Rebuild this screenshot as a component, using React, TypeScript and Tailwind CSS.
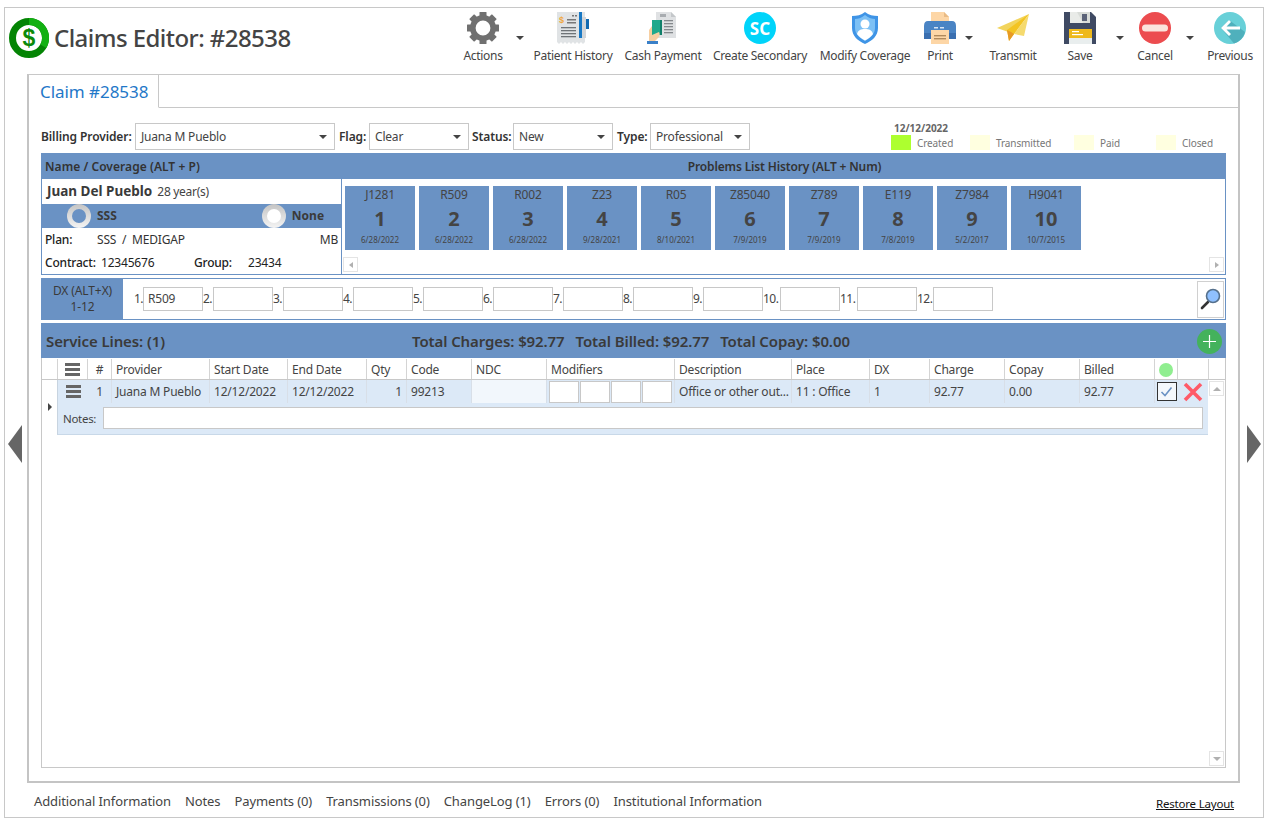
import React from "react";

const font = { fontFamily: '"Noto Sans", "Open Sans", sans-serif' };

const Gear = () => (
  <svg width="32" height="32" viewBox="0 0 32 32">
    {[0, 45, 90, 135, 180, 225, 270, 315].map((a) => (
      <rect key={a} x="12.5" y="0" width="7" height="7" rx="0.5" fill="#707070" transform={`rotate(${a} 16 16)`} />
    ))}
    <circle cx="16" cy="16" r="10.2" fill="none" stroke="#707070" strokeWidth="5.6" />
  </svg>
);

const History = () => (
  <svg width="32" height="32" viewBox="0 0 32 32">
    <path d="M0 0H28V30L26 32L24 30L22 32L20 30L18 32L16 30L14 32L12 30L10 32L8 30L6 32L4 30L2 32L0 30Z" fill="#e0e3e5" />
    <rect x="22" y="5" width="7" height="21" fill="#d2d5d8" />
    <rect x="22" y="0" width="3" height="26" fill="#1878c4" />
    <rect x="29" y="7" width="3" height="10" fill="#1269b0" />
    <text x="2" y="11" fontSize="9" fontWeight="700" fill="#f0a83c" fontFamily="Liberation Sans">$</text>
    <rect x="15" y="3" width="2" height="1.5" fill="#777" />
    <rect x="18" y="3" width="2" height="1.5" fill="#777" />
    <rect x="10" y="7" width="9" height="1.5" fill="#777" />
    <rect x="10" y="10" width="9" height="1.5" fill="#777" />
    {[15, 18, 21, 24].map((y) => (
      <rect key={y} x="4" y={y} width="15" height="1.3" fill="#6f7478" />
    ))}
  </svg>
);

const Cash = () => (
  <svg width="32" height="32" viewBox="0 0 32 32">
    <path d="M9 0H24L29 5V26H9Z" fill="#dfe1e3" />
    <path d="M24 0L29 5H24Z" fill="#c4c7ca" />
    <rect x="13" y="2" width="6" height="3" fill="#a8acb0" />
    {[8, 11, 14, 17, 20].map((y) => (
      <rect key={y} x="17" y={y} width="9" height="1.3" fill="#85898d" />
    ))}
    <path d="M5 8H15V23H5Z" fill="#1fa98c" />
    <rect x="13" y="8" width="2" height="15" fill="#12806a" />
    <path d="M2 18L5 14V23L12 20C13 22 13 24 11 26L8 29H2Z" fill="#f7cfa2" />
    <rect x="0" y="29" width="11" height="3" fill="#3a80c8" />
  </svg>
);

const SC = () => (
  <div className="w-8 h-8 rounded-full bg-[#00d4fa] flex items-center justify-center text-white font-bold text-[17px] leading-none">SC</div>
);

const Shield = () => (
  <svg width="32" height="32" viewBox="0 0 32 32">
    <path d="M16 0C20 3 24 4 29 4V16C29 24 23 29 16 32C9 29 3 24 3 16V4C8 4 12 3 16 0Z" fill="#3f94e6" />
    <path d="M16 3C20 6 23 7 26 7V16C26 22 21 26 16 29C11 26 6 22 6 16V7C9 7 12 6 16 3Z" fill="#7cc0f5" />
    <circle cx="16" cy="12" r="4.5" fill="#fff" />
    <path d="M8 22C9 18 12 17 16 17C20 17 23 18 24 22C22 25 19 27 16 28.5C13 27 10 25 8 22Z" fill="#fff" />
  </svg>
);

const Printer = () => (
  <svg width="34" height="32" viewBox="0 0 34 32">
    <path d="M8 0H21L26 5V12H8Z" fill="#fdd6a6" />
    <path d="M21 0L26 5H21Z" fill="#e9bb85" />
    <path d="M5 9H29Q33 9 33 14V27H1V14Q1 9 5 9Z" fill="#4a84c4" />
    <rect x="1" y="21" width="32" height="6" fill="#3a6fb0" />
    <rect x="11" y="15" width="4" height="1.5" fill="#d7e4f3" />
    <rect x="17" y="15" width="4" height="1.5" fill="#d7e4f3" />
    <rect x="8" y="18" width="18" height="14" fill="#fdd6a6" />
    <rect x="11" y="23" width="12" height="1.4" fill="#b08a5c" />
    <rect x="11" y="26" width="12" height="1.4" fill="#b08a5c" />
  </svg>
);

const Plane = () => (
  <svg width="32" height="28" viewBox="0 0 32 28">
    <path d="M0 14L32 0L17 20Z" fill="#f2d45c" />
    <path d="M32 0L10 16L12 27L17 20Z" fill="#f3c422" />
    <path d="M10 16L12 27L17 20L14 18Z" fill="#e79a25" />
    <path d="M32 0L17 20L27 22Z" fill="#f5da6e" />
  </svg>
);

const Floppy = () => (
  <svg width="32" height="32" viewBox="0 0 32 32">
    <path d="M0 0H27L32 5V32H0Z" fill="#3f4a63" />
    <rect x="6" y="0" width="20" height="11" fill="#d9dcd8" />
    <path d="M6 0H13L19 11H6Z" fill="#e9ebe8" />
    <rect x="18" y="2" width="5" height="7" fill="#5b6378" />
    <rect x="5" y="17" width="23" height="9" fill="#eeb91c" />
    <rect x="5" y="26" width="23" height="6" fill="#e9eeee" />
    <rect x="8" y="19" width="7" height="1.2" fill="#fff" />
    <rect x="8" y="22" width="11" height="1.2" fill="#fff" />
  </svg>
);

const Cancel = () => (
  <svg width="32" height="32" viewBox="0 0 32 32">
    <circle cx="16" cy="16" r="16" fill="#ec4c4f" />
    <rect x="3" y="12.5" width="26" height="7" rx="3.5" fill="#fbe3dc" />
  </svg>
);

const Previous = () => (
  <svg width="32" height="32" viewBox="0 0 32 32">
    <circle cx="16" cy="16" r="16" fill="#68d0d8" />
    <path d="M7 16L15 8L31 20A16 16 0 0 1 20 31.5Z" fill="#4fb0bc" />
    <path d="M15 8L7 16L15 24L17 22L12.5 17.5H26V14.5H12.5L17 10Z" fill="#fff" />
  </svg>
);

const Caret = ({ w }: { w: string }) => (
  <div className={`${w} flex justify-center pt-[24px] self-start`}>
    <div className="w-0 h-0 border-l-[4px] border-r-[4px] border-t-[4px] border-l-transparent border-r-transparent border-t-[#444]" />
  </div>
);

const Tool = ({ label, w, children }: { label: string; w: string; children: React.ReactNode }) => (
  <div className={`${w} flex flex-col items-center shrink-0`}>
    <div className="h-[32px] flex items-center justify-center">{children}</div>
    <div className="mt-[3px] text-[12px] leading-[18px] text-[#444] whitespace-nowrap tracking-[-0.3px]">{label}</div>
  </div>
);

const Select = ({ value, w }: { value: string; w: string }) => (
  <div className={`${w} h-[27px] border border-[#c8c8c8] flex items-center justify-between pl-[5px] pr-[7px] text-[12px] text-[#444] bg-white shrink-0 tracking-[-0.2px]`}>
    <span>{value}</span>
    <span className="w-0 h-0 border-l-[4px] border-r-[4px] border-t-[4px] border-l-transparent border-r-transparent border-t-[#444]" />
  </div>
);

const Label = ({ children, w }: { children: React.ReactNode; w: string }) => (
  <div className={`${w} shrink-0 text-[12px] font-semibold text-[#333] whitespace-nowrap tracking-[-0.1px]`}>{children}</div>
);

const Legend = ({ label, color, w }: { label: string; color: string; w: string }) => (
  <div className={`${w} flex items-end shrink-0`}>
    <div className="w-[20px] h-[15px]" style={{ backgroundColor: color }} />
    <div className="ml-[6px] text-[10px] leading-[14px] text-[#777] tracking-[-0.1px]">{label}</div>
  </div>
);

const problems = [
  ["J1281", "6/28/2022"],
  ["R509", "6/28/2022"],
  ["R002", "6/28/2022"],
  ["Z23", "9/28/2021"],
  ["R05", "8/10/2021"],
  ["Z85040", "7/9/2019"],
  ["Z789", "7/9/2019"],
  ["E119", "7/8/2019"],
  ["Z7984", "5/2/2017"],
  ["H9041", "10/7/2015"],
];

const Toggle = ({ on }: { on: boolean }) => (
  <div className="w-[24px] h-[24px] rounded-full bg-gradient-to-b from-[#c4c4c4] to-[#f4f4f4] flex items-center justify-center">
    <div className={`w-[14px] h-[14px] rounded-full ${on ? "bg-[#6a92c4]" : "bg-white"}`} />
  </div>
);

const ScrollBtn = ({ dir }: { dir: "l" | "r" | "u" | "d" }) => (
  <div className="w-[15px] h-[15px] border border-[#e4e4e4] bg-white flex items-center justify-center shrink-0">
    {dir === "l" && <div className="w-0 h-0 border-y-[3px] border-r-[4px] border-y-transparent border-r-[#b0b0b0]" />}
    {dir === "r" && <div className="w-0 h-0 border-y-[3px] border-l-[4px] border-y-transparent border-l-[#b0b0b0]" />}
    {dir === "u" && <div className="w-0 h-0 border-x-[4px] border-b-[4px] border-x-transparent border-b-[#b0b0b0]" />}
    {dir === "d" && <div className="w-0 h-0 border-x-[4px] border-t-[4px] border-x-transparent border-t-[#b0b0b0]" />}
  </div>
);

const dx = [
  ["1.", "R509", "w-[9px]"],
  ["2.", "", "w-[10px]"],
  ["3.", "", "w-[10px]"],
  ["4.", "", "w-[10px]"],
  ["5.", "", "w-[10px]"],
  ["6.", "", "w-[10px]"],
  ["7.", "", "w-[10px]"],
  ["8.", "", "w-[10px]"],
  ["9.", "", "w-[10px]"],
  ["10.", "", "w-[17px]"],
  ["11.", "", "w-[17px]"],
  ["12.", "", "w-[16px]"],
];

const Hamburger = () => (
  <div className="flex flex-col gap-[2px]">
    <div className="w-[15px] h-[3px] bg-[#666]" />
    <div className="w-[15px] h-[3px] bg-[#666]" />
    <div className="w-[15px] h-[3px] bg-[#666]" />
  </div>
);

const cols = [
  { t: "Provider", v: "Juana M Pueblo", w: "w-[98px]" },
  { t: "Start Date", v: "12/12/2022", w: "w-[78px]" },
  { t: "End Date", v: "12/12/2022", w: "w-[79px]" },
  { t: "Qty", v: "1", w: "w-[40px]", right: true },
  { t: "Code", v: "99213", w: "w-[65px]" },
];
const cols2 = [
  { t: "Description", v: "Office or other out...", w: "w-[117px]" },
  { t: "Place", v: "11 : Office", w: "w-[78px]" },
  { t: "DX", v: "1", w: "w-[60px]" },
  { t: "Charge", v: "92.77", w: "w-[75px]" },
  { t: "Copay", v: "0.00", w: "w-[75px]" },
  { t: "Billed", v: "92.77", w: "w-[75px]" },
];

const hCell = "h-full border-r border-[#d4d4d4] flex items-center px-[4px] pt-[1px] shrink-0 whitespace-nowrap tracking-[-0.2px]";
const rCell = "h-[23px] border-r border-[#d8dfe8] flex items-center px-[4px] pt-[1px] shrink-0 whitespace-nowrap tracking-[-0.2px]";

const tabs = ["Additional Information", "Notes", "Payments (0)", "Transmissions (0)", "ChangeLog (1)", "Errors (0)", "Institutional Information"];

export default function App() {
  return (
    <div style={font} className="w-[1267px] h-[821px] bg-white pt-[7px] pl-[4px] overflow-hidden">
      <div className="w-[1260px] h-[811px] border border-[#c8c8c8] flex flex-col">
        {/* header */}
        <div className="h-[66px] flex shrink-0">
          <div className="flex items-start pl-[4px] pt-[10px] w-[448px] shrink-0">
            <svg width="40" height="40" viewBox="0 0 40 40">
              <circle cx="20" cy="20" r="16.5" fill="#fff" stroke="#048404" strokeWidth="7" />
              <path d="M20 3.5A16.5 16.5 0 0 1 34.3 28.2" fill="none" stroke="#12b012" strokeWidth="7" />
              <text x="20" y="28" textAnchor="middle" fontSize="23" fontWeight="700" fill="#0a8a0a" fontFamily="Liberation Sans">$</text>
            </svg>
            <div className="ml-[5px] mt-[1px] text-[24px] leading-[38px] font-medium text-[#444] whitespace-nowrap tracking-[-0.55px]">Claims Editor: #28538</div>
          </div>
          <div className="flex pt-[4px] items-start">
            <Tool label="Actions" w="w-[60px]"><Gear /></Tool>
            <Caret w="w-[14px]" />
            <div className="w-[1px]" />
            <Tool label="Patient History" w="w-[90px]"><History /></Tool>
            <Tool label="Cash Payment" w="w-[90px]"><Cash /></Tool>
            <Tool label="Create Secondary" w="w-[104px]"><SC /></Tool>
            <Tool label="Modify Coverage" w="w-[106px]"><Shield /></Tool>
            <Tool label="Print" w="w-[44px]"><Printer /></Tool>
            <Caret w="w-[14px]" />
            <Tool label="Transmit" w="w-[74px]"><Plane /></Tool>
            <Tool label="Save" w="w-[60px]"><Floppy /></Tool>
            <Caret w="w-[20px]" />
            <Tool label="Cancel" w="w-[50px]"><Cancel /></Tool>
            <Caret w="w-[20px]" />
            <Tool label="Previous" w="w-[60px]"><Previous /></Tool>
          </div>
        </div>

        {/* body */}
        <div className="flex flex-1 min-h-0">
          <div className="w-[22px] shrink-0 flex items-center justify-center">
            <div className="w-0 h-0 border-y-[19px] border-r-[14px] border-y-transparent border-r-[#666] mr-[3px] mt-[30px]" />
          </div>
          <div className="w-[1213px] h-[709px] shrink-0 border-t border-t-[#c8c8c8] border-l-2 border-r-2 border-b-2 border-l-[#c4c4c4] border-r-[#c4c4c4] border-b-[#c4c4c4] flex flex-col">
            <div className="h-[33px] border-b border-[#c8c8c8] shrink-0 flex">
              <div className="w-[130px] h-[33px] border-r border-b border-b-white border-r-[#c8c8c8] flex items-center pl-[11px] pt-[1px] text-[17px] text-[#1f78c8] bg-white tracking-[-0.05px]">Claim #28538</div>
            </div>
            <div className="flex-1 min-h-0 pl-[12px] pr-[12px] pt-[15px] flex flex-col pb-[13px]">
              {/* filter row */}
              <div className="h-[27px] flex items-center shrink-0">
                <Label w="w-[94px]">Billing Provider:</Label>
                <Select value="Juana M Pueblo" w="w-[200px]" />
                <Label w="w-[34px] pl-[4px]">Flag:</Label>
                <Select value="Clear" w="w-[100px]" />
                <Label w="w-[44px] pl-[3px]">Status:</Label>
                <Select value="New" w="w-[100px]" />
                <Label w="w-[37px] pl-[4px]">Type:</Label>
                <Select value="Professional" w="w-[100px]" />
                <div className="ml-[141px] flex flex-col h-[27px] mt-[-2px]">
                  <div className="pl-[3px] text-[10px] leading-[12px] font-bold text-[#666]">12/12/2022</div>
                  <div className="flex mt-[1px]">
                    <Legend label="Created" color="#adff2f" w="w-[79px]" />
                    <Legend label="Transmitted" color="#ffffe0" w="w-[104px]" />
                    <Legend label="Paid" color="#ffffe0" w="w-[82px]" />
                    <Legend label="Closed" color="#ffffe0" w="w-[60px]" />
                  </div>
                </div>
              </div>

              {/* blue heading */}
              <div className="mt-[3px] h-[26px] bg-[#6a92c4] flex items-center pt-[2px] text-[12px] font-semibold text-[#333] shrink-0">
                <div className="w-[301px] pl-[4px] shrink-0 tracking-[0.05px]">Name / Coverage (ALT + P)</div>
                <div className="flex-1 text-center pl-[1px] tracking-[-0.15px]">Problems List History (ALT + Num)</div>
              </div>

              {/* coverage + problems */}
              <div className="h-[96px] border-x border-b border-[#6a92c4] flex shrink-0">
                <div className="w-[300px] border-r border-[#6a92c4] flex flex-col shrink-0">
                  <div className="h-[25px] flex items-center pl-[5px] text-[#444]">
                    <span className="text-[13.5px] font-bold text-[#3a3a3a] tracking-[0px]">Juan Del Pueblo</span>
                    <span className="ml-[5px] text-[12px] tracking-[-0.3px]">28 year(s)</span>
                  </div>
                  <div className="h-[24px] bg-[#6a92c4] flex items-center text-[12px] font-bold text-[#3a3a3a]">
                    <div className="ml-[25px]"><Toggle on /></div>
                    <span className="ml-[6px]">SSS</span>
                    <div className="ml-[145px]"><Toggle on={false} /></div>
                    <span className="ml-[6px]">None</span>
                  </div>
                  <div className="h-[23px] flex items-center pl-[3px] text-[12px] text-[#222] tracking-[-0.2px]">
                    <span className="w-[52px] font-medium">Plan:</span>
                    <span className="text-[#333]">SSS&nbsp;&nbsp;/&nbsp;&nbsp;MEDIGAP</span>
                    <span className="ml-auto pr-[3px] text-[#333]">MB</span>
                  </div>
                  <div className="h-[23px] flex items-center pl-[3px] text-[12px] text-[#222] tracking-[-0.2px]">
                    <span className="w-[56px] font-medium shrink-0">Contract:</span>
                    <span className="w-[93px] shrink-0">12345676</span>
                    <span className="w-[54px] shrink-0 font-medium">Group:</span>
                    <span>23434</span>
                  </div>
                </div>
                <div className="flex-1 flex flex-col min-w-0">
                  <div className="flex gap-[4px] pl-[3px] pt-[7px] h-[78px] shrink-0">
                    {problems.map(([code, date], i) => (
                      <div key={code} className="w-[70px] h-[64px] bg-[#6a92c4] flex flex-col items-center text-[#444] shrink-0">
                        <div className="text-[12px] leading-[18px] tracking-[-0.2px]">{code}</div>
                        <div className="text-[20px] leading-[24px] mt-[3px] font-bold text-[#444]">{i + 1}</div>
                        <div className="text-[8px] leading-[10px] mt-[4px]">{date}</div>
                      </div>
                    ))}
                  </div>
                  <div className="flex justify-between px-[1px]">
                    <ScrollBtn dir="l" />
                    <ScrollBtn dir="r" />
                  </div>
                </div>
              </div>

              {/* DX */}
              <div className="mt-[3px] h-[42px] border border-[#6a92c4] flex items-center shrink-0">
                <div className="w-[81px] h-full bg-[#6a92c4] flex flex-col items-center justify-center text-[12px] leading-[16px] text-[#3a3a3a] tracking-[-0.1px] shrink-0">
                  <div>DX (ALT+X)</div>
                  <div>1-12</div>
                </div>
                <div className="flex items-center pl-[11px] text-[12px] text-[#444]">
                  {dx.map(([n, v, w]) => (
                    <React.Fragment key={n}>
                      <span className={`${w} shrink-0 whitespace-nowrap tracking-[-0.5px]`}>{n}</span>
                      <div className="w-[60px] h-[24px] border border-[#c8c8c8] flex items-center pl-[4px] shrink-0 tracking-[-0.2px]">{v}</div>
                    </React.Fragment>
                  ))}
                </div>
                <div className="ml-auto mr-[1px] w-[27px] h-[37px] border border-[#d0d0d0] flex items-center justify-center">
                  <svg width="22" height="24" viewBox="0 0 22 24">
                    <path d="M8 15L2 21" stroke="#333" strokeWidth="2.6" strokeLinecap="round" />
                    <circle cx="13" cy="9" r="6.5" fill="#8fc0ff" stroke="#55708c" strokeWidth="1.6" />
                  </svg>
                </div>
              </div>

              {/* service heading */}
              <div className="mt-[3px] h-[35px] bg-[#6a92c4] flex items-center pt-[1px] shrink-0 text-[#3a3a3a] font-semibold">
                <div className="w-[371px] pl-[5px] text-[15px] tracking-[-0.1px] shrink-0">Service Lines: (1)</div>
                <div className="text-[15px] tracking-[-0.1px] whitespace-nowrap flex gap-[11px]">
                  <span>Total Charges: $92.77</span>
                  <span>Total Billed: $92.77</span>
                  <span>Total Copay: $0.00</span>
                </div>
                <div className="ml-auto mr-[4px] w-[25px] h-[25px] rounded-full bg-[#44b25c] flex items-center justify-center">
                  <svg width="15" height="15" viewBox="0 0 15 15"><path d="M7.5 1V14M1 7.5H14" stroke="#fff" strokeWidth="1.2" /></svg>
                </div>
              </div>

              {/* table */}
              <div className="flex-1 min-h-0 border-x border-b border-[#c8c8c8] flex flex-col text-[12px] text-[#444]">
                <div className="h-[21px] border-b border-[#c8c8c8] flex shrink-0 mt-[1px]">
                  <div className={`${hCell} w-[16px] !px-0`} />
                  <div className={`${hCell} w-[30px] justify-center`}><Hamburger /></div>
                  <div className={`${hCell} w-[24px] justify-center`}>#</div>
                  {cols.map((c) => <div key={c.t} className={`${hCell} ${c.w}`}>{c.t}</div>)}
                  <div className={`${hCell} w-[75px]`}>NDC</div>
                  <div className={`${hCell} w-[128px]`}>Modifiers</div>
                  {cols2.map((c) => <div key={c.t} className={`${hCell} ${c.w}`}>{c.t}</div>)}
                  <div className={`${hCell} w-[23px] justify-center`}><div className="w-[14px] h-[14px] rounded-full bg-[#90ee90]" /></div>
                  <div className={`${hCell} w-[31px]`} />
                </div>
                <div className="flex-1 min-h-0 flex">
                  <div className="w-[15px] shrink-0 h-[55px] flex items-end justify-center pb-[24px]">
                    <div className="w-0 h-0 border-y-[4px] border-l-[4px] border-y-transparent border-l-[#444]" />
                  </div>
                  <div className="w-[1151px] shrink-0">
                    <div className="bg-[#dce9f7] border-l border-b border-l-[#c8d4e0] border-b-[#c8d8e8] h-[55px]">
                      <div className="flex h-[23px]">
                        <div className={`${rCell} w-[30px] justify-center !border-r-0 !pt-0`}><Hamburger /></div>
                        <div className={`${rCell} w-[24px] justify-center`}>1</div>
                        {cols.map((c) => (
                          <div key={c.t} className={`${rCell} ${c.w} ${c.right ? "justify-end" : ""}`}>{c.v}</div>
                        ))}
                        <div className={`${rCell} w-[75px] bg-[#f2f7fc]`} />
                        <div className={`${rCell} w-[128px] gap-[1px] !px-[2px] !pt-0`}>
                          {[0, 1, 2, 3].map((i) => <div key={i} className="w-[30px] h-[22px] border border-[#c8c8c8] bg-white shrink-0" />)}
                        </div>
                        {cols2.map((c) => <div key={c.t} className={`${rCell} ${c.w}`}>{c.v}</div>)}
                        <div className="w-[23px] h-[23px] flex items-center justify-center shrink-0">
                          <div className="w-[20px] h-[19px] border border-[#333] bg-[#f4f8fc] flex items-center justify-center">
                            <svg width="13" height="11" viewBox="0 0 13 11"><path d="M1.5 6L5 9.5L11.5 1.5" stroke="#6a92c4" strokeWidth="1.6" fill="none" /></svg>
                          </div>
                        </div>
                        <div className="w-[29px] h-[23px] flex items-center justify-center shrink-0">
                          <svg width="20" height="20" viewBox="0 0 20 20"><path d="M2 2L18 18M18 2L2 18" stroke="#ff5a68" strokeWidth="3.6" /></svg>
                        </div>
                      </div>
                      <div className="flex items-start h-[31px] pt-[4px]">
                        <span className="w-[45px] pl-[5px] pt-[1px] shrink-0 tracking-[-0.3px] text-[11.5px] leading-[22px]">Notes:</span>
                        <div className="w-[1100px] h-[22px] border border-[#c8c8c8] bg-white shrink-0" />
                      </div>
                    </div>
                  </div>
                  <div className="flex-1 flex flex-col justify-between items-center pt-[1px] pb-[1px]">
                    <ScrollBtn dir="u" />
                    <ScrollBtn dir="d" />
                  </div>
                </div>
              </div>
            </div>
          </div>
          <div className="flex-1 flex items-center justify-center">
            <div className="w-0 h-0 border-y-[19px] border-l-[14px] border-y-transparent border-l-[#666] ml-[5px] mt-[30px]" />
          </div>
        </div>

        {/* footer */}
        <div className="h-[34px] flex items-start shrink-0 pl-[29px] pr-[29px] text-[#444]">
          <div className="flex gap-[14px] text-[13px] leading-[34px] tracking-[-0.1px] whitespace-nowrap mt-[1px]">
            {tabs.map((t) => <span key={t}>{t}</span>)}
          </div>
          <div className="ml-auto mt-[13px] text-[11.5px] leading-[16px] underline text-[#111] tracking-[-0.2px]">Restore Layout</div>
        </div>
      </div>
    </div>
  );
}
